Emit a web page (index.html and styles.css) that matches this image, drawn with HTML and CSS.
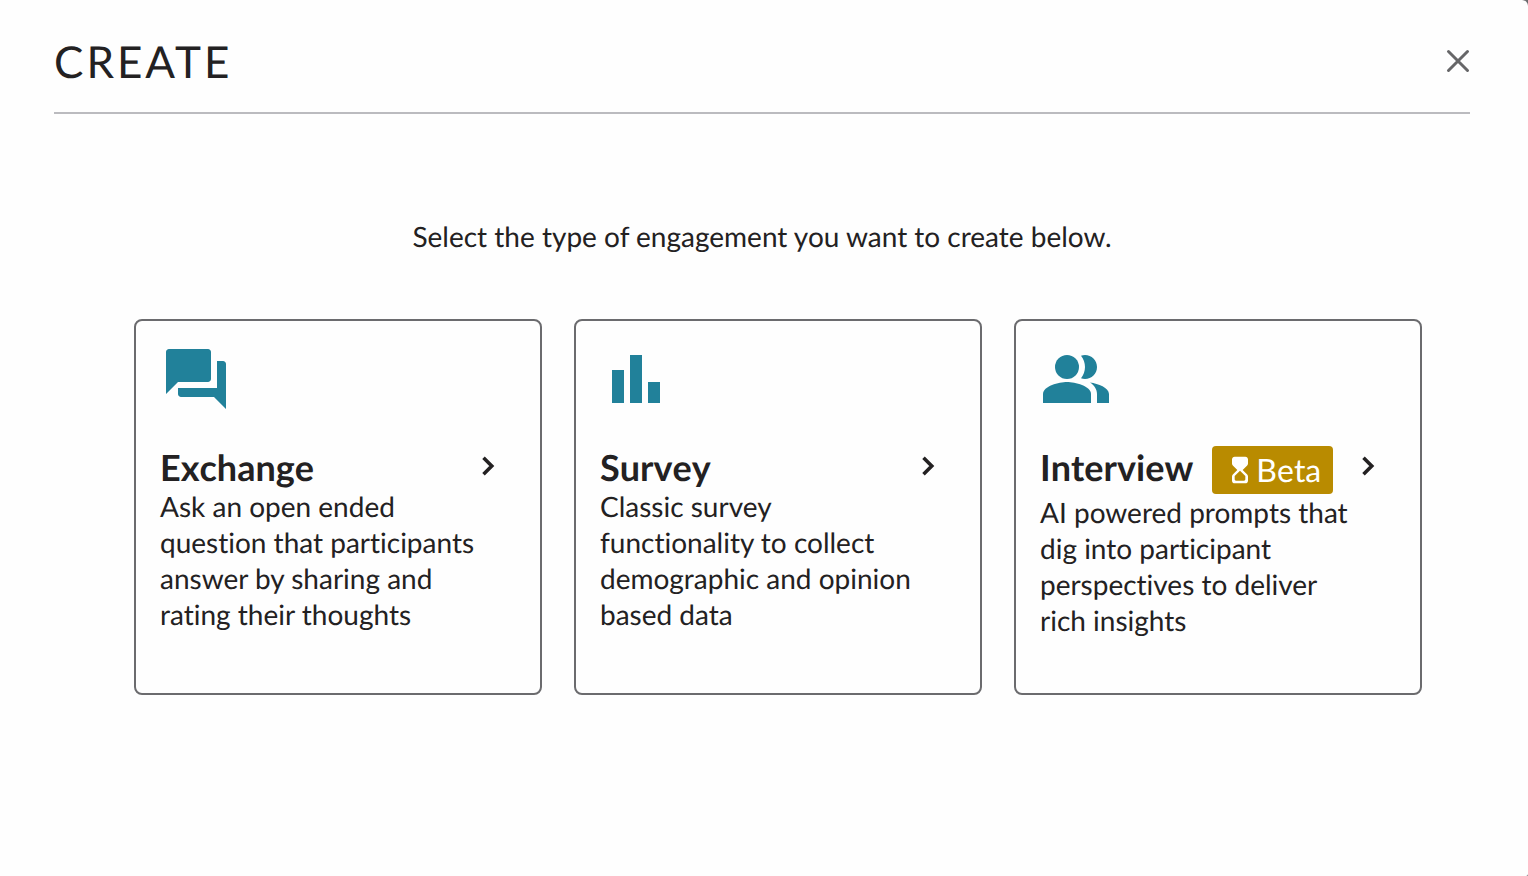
FILE: index.html
```html
<!DOCTYPE html>
<html lang="en">
<head>
    <meta charset="UTF-8">
    <meta name="viewport" content="width=device-width, initial-scale=1.0">
    <title>Create</title>
    <link rel="stylesheet" href="styles.css">
</head>
<body>
    <main class="dialog">
        <header class="dialog-header">
            <h1>CREATE</h1>
            <button type="button" class="close" aria-label="Close">
                <svg viewBox="0 0 24 24"><path d="M2.5 2.5l19 19M21.5 2.5l-19 19"/></svg>
            </button>
        </header>

        <p class="intro">Select the type of engagement you want to create below.</p>

        <div class="cards">
            <button type="button" class="card">
                <svg class="card-icon" viewBox="0 0 24 24"><path d="M21 6h-2v9H6v2c0 .55.45 1 1 1h11l4 4V7c0-.55-.45-1-1-1zm-4 6V3c0-.55-.45-1-1-1H3c-.55 0-1 .45-1 1v14l4-4h10c.55 0 1-.45 1-1z"/></svg>
                <span class="card-heading">
                    <span class="card-title">Exchange</span>
                    <svg class="chevron" viewBox="0 0 24 24"><path d="M9 6.5l5.5 5.5L9 17.5"/></svg>
                </span>
                <span class="card-text">Ask an open ended question that participants answer by sharing and rating their thoughts</span>
            </button>

            <button type="button" class="card">
                <svg class="card-icon" viewBox="0 0 24 24"><path d="M4 9h4v11H4zM10 4h4v16h-4zM16 13h4v7h-4z"/></svg>
                <span class="card-heading">
                    <span class="card-title">Survey</span>
                    <svg class="chevron" viewBox="0 0 24 24"><path d="M9 6.5l5.5 5.5L9 17.5"/></svg>
                </span>
                <span class="card-text">Classic survey functionality to collect demographic and opinion based data</span>
            </button>

            <button type="button" class="card">
                <svg class="card-icon" viewBox="0 0 24 24">
                    <circle cx="9" cy="8" r="4"/>
                    <path d="M9 13c-2.67 0-8 1.34-8 4v3h16v-3c0-2.66-5.33-4-8-4z"/>
                    <path d="M15 12c2.21 0 4-1.79 4-4s-1.79-4-4-4c-.47 0-.91.1-1.33.24C14.5 5.27 15 6.58 15 8s-.5 2.73-1.33 3.76c.42.14.86.24 1.33.24z"/>
                    <path d="M16.67 13.13C18.04 14.06 19 15.32 19 17v3h4v-3c0-2.18-3.57-3.47-6.33-3.87z"/>
                </svg>
                <span class="card-heading">
                    <span class="card-title">Interview</span>
                    <span class="badge">
                        <svg viewBox="0 0 24 24"><path d="M8 2c-1.1 0-2 .9-2 2v3.2c0 .5.2 1 .6 1.4L10 12l-3.4 3.4c-.4.4-.6.9-.6 1.4V20c0 1.1.9 2 2 2h8c1.1 0 2-.9 2-2v-3.2c0-.5-.2-1-.6-1.4L14 12l3.4-3.4c.4-.4.6-.9.6-1.4V4c0-1.1-.9-2-2-2H8zm8 14.5V19c0 .55-.45 1-1 1H9c-.55 0-1-.45-1-1v-2.5l4-4 4 4z"/></svg>
                        <span>Beta</span>
                    </span>
                    <svg class="chevron" viewBox="0 0 24 24"><path d="M9 6.5l5.5 5.5L9 17.5"/></svg>
                </span>
                <span class="card-text">AI powered prompts that dig into participant perspectives to deliver rich insights</span>
            </button>
        </div>
    </main>
</body>
</html>
```

FILE: styles.css
```css
* {
    box-sizing: border-box;
}

/* Backdrop behind the dialog */
body {
    margin: 0;
    background-color: #6b6b6e;
    color: #232122;
    font-family: 'Lato', sans-serif;
    font-size: 28px;
    line-height: 36px;
    font-variant-ligatures: none;
    text-rendering: geometricPrecision;
}

.dialog {
    min-height: 100vh;
    padding: 36px 58px 36px 54px;
    background-color: #fefefe;
    border-radius: 0 6px 2px 0;
}

/* Header */
.dialog-header {
    display: flex;
    justify-content: space-between;
    align-items: center;
    padding-bottom: 24px;
    border-bottom: 2px solid #bbbbbf;
}

h1 {
    margin: 0;
    font-size: 44px;
    font-weight: 400;
    line-height: 52px;
    letter-spacing: 3px;
}

button {
    color: inherit;
    font: inherit;
    font-variant-ligatures: inherit;
    text-rendering: inherit;
    cursor: pointer;
}

svg {
    display: block;
    flex-shrink: 0;
    fill: currentColor;
}

.close {
    padding: 0 0 2px;
    border: none;
    background: none;
    color: #666668;
}

.close svg {
    width: 24px;
    height: 24px;
    stroke: currentColor;
    stroke-width: 3;
    stroke-linecap: round;
}

.intro {
    margin: 104px 0 65px;
    text-align: center;
}

/* Engagement cards */
.cards {
    display: grid;
    grid-template-columns: repeat(3, 1fr);
    gap: 32px;
    padding: 0 48px 0 80px;
}

.card {
    display: flex;
    flex-direction: column;
    justify-content: flex-start;
    align-items: stretch;
    padding: 22px 34px 55px 24px;
    border: 2px solid #6b6b6e;
    border-radius: 8px;
    background-color: #fefefe;
    text-align: left;
}

.card-icon {
    width: 72px;
    height: 72px;
    margin-bottom: 31px;
    color: #21819a;
}

.card-heading {
    display: flex;
    align-items: flex-start;
    font-kerning: none;
}

.card-title {
    font-size: 36px;
    font-weight: 700;
    line-height: 42px;
}

.chevron {
    width: 36px;
    height: 36px;
    margin-top: 2px;
    margin-left: auto;
    fill: none;
    stroke: currentColor;
    stroke-width: 2.4;
}

.card-text {
    padding-right: 24px;
}

.badge {
    display: flex;
    align-items: center;
    height: 48px;
    margin-left: 19px;
    padding: 0 12px;
    border-radius: 4px;
    background-color: #b98b00;
    color: #fff;
    font-size: 32px;
}

.badge svg {
    width: 32px;
    height: 32px;
}
```
